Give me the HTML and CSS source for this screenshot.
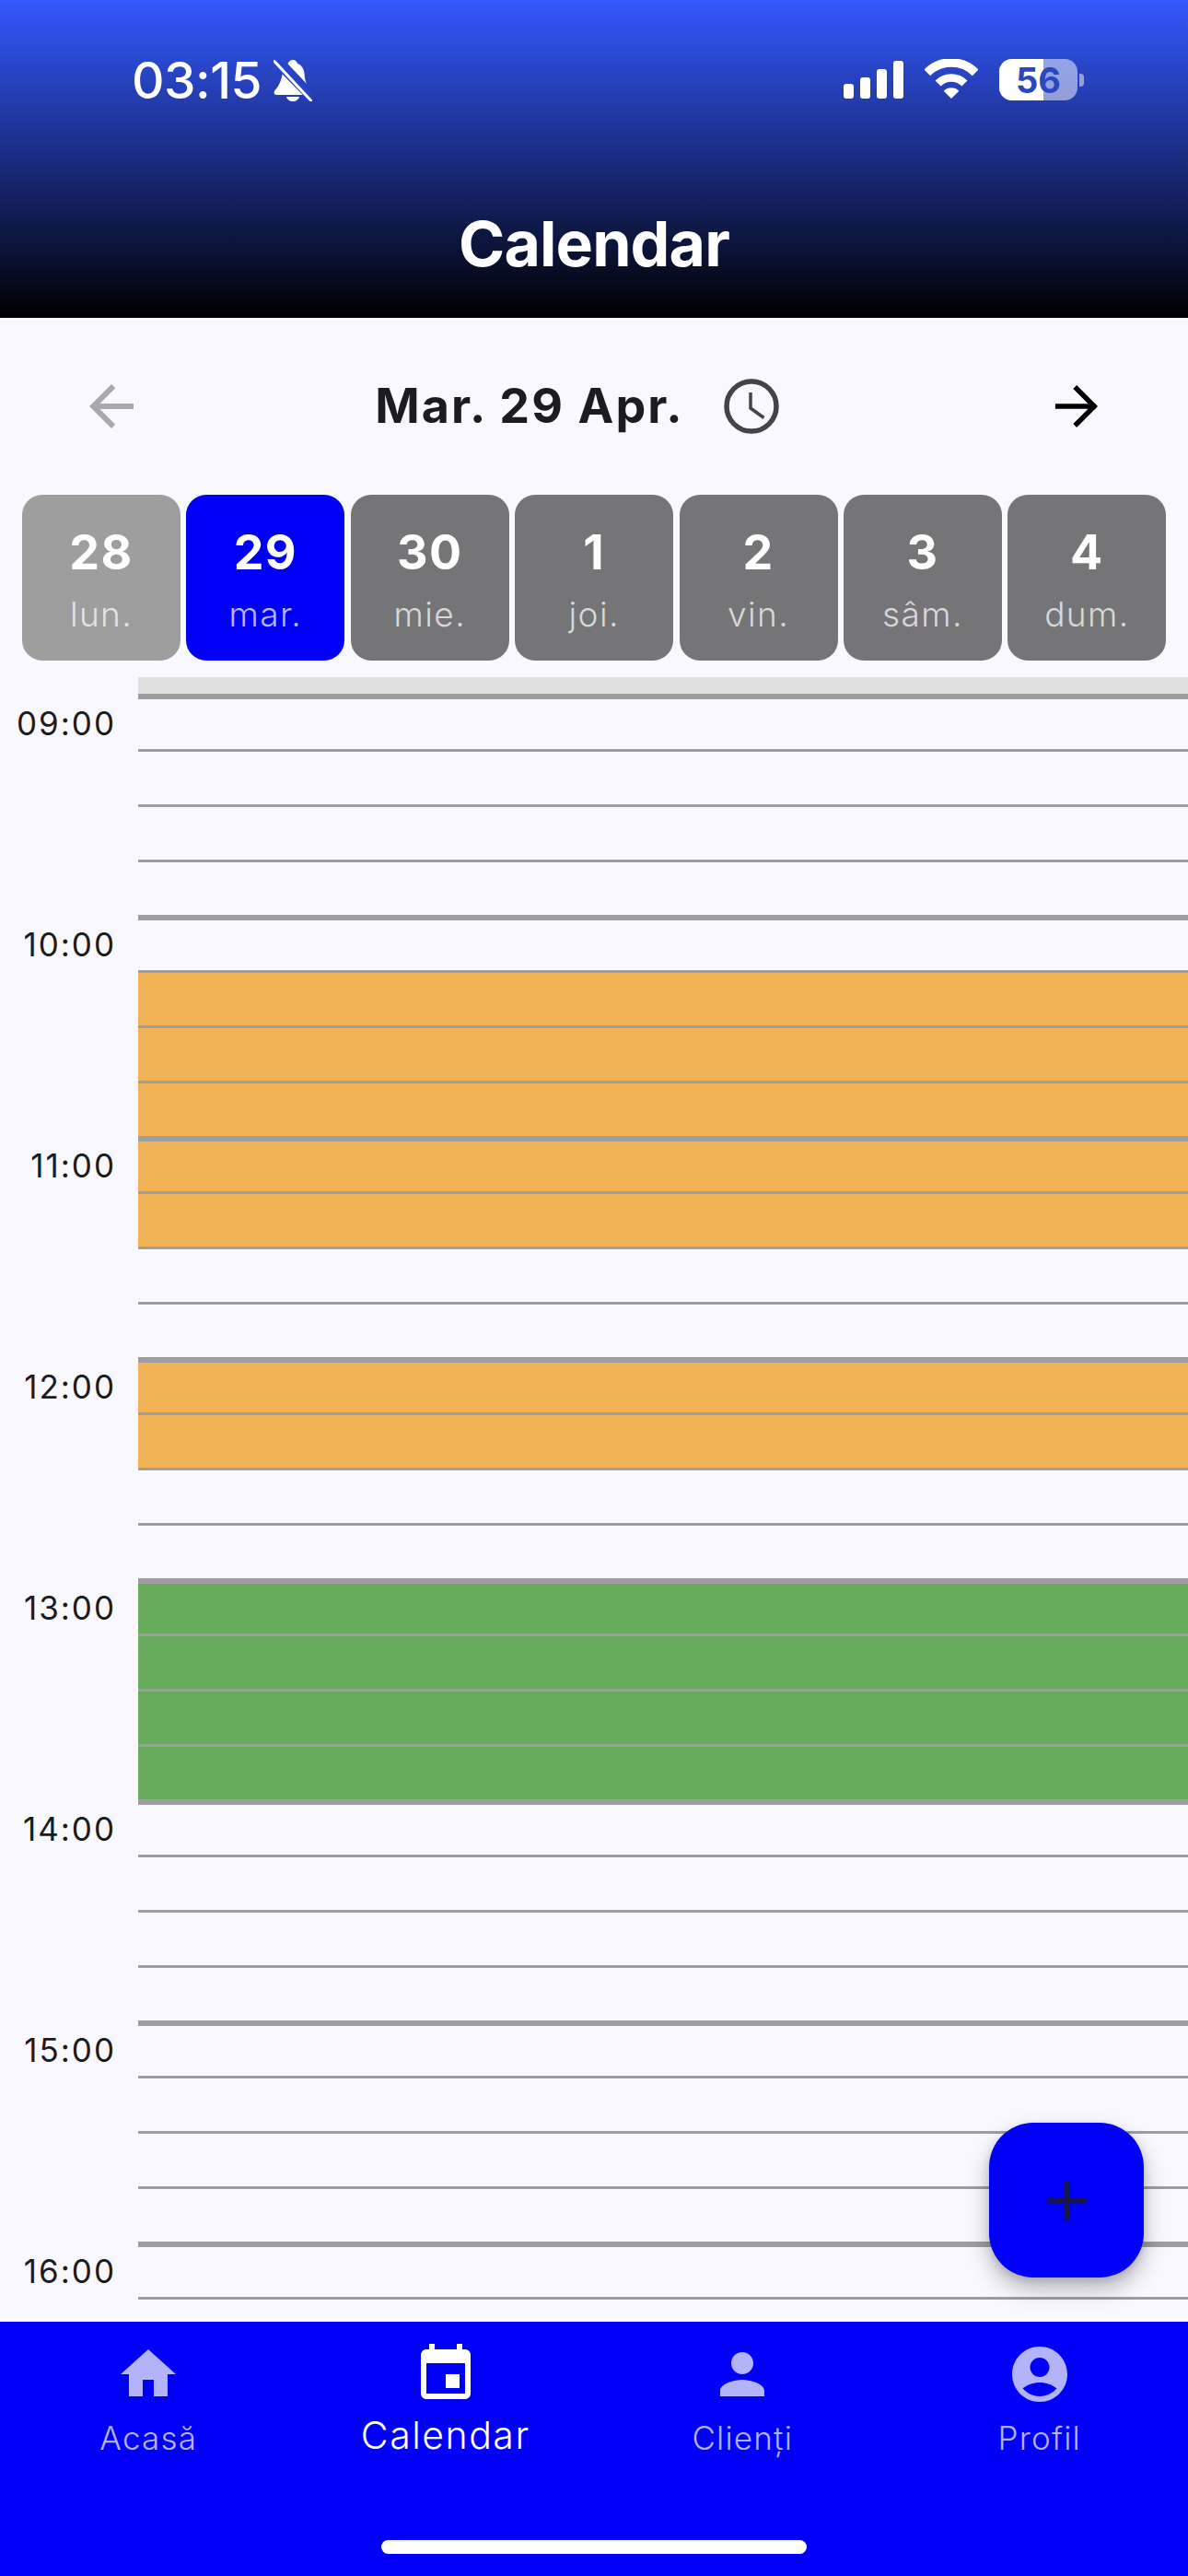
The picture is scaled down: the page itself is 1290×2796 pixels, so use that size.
FILE: index.html
```html
<!DOCTYPE html>
<html lang="ro">
<head>
<meta charset="utf-8">
<title>Calendar</title>
<link rel="stylesheet" href="styles.css">
</head>
<body>
<div class="phone">
  <header class="appbar">
    <div class="status">
      <div class="status-left">
        <span class="clock-text">03:15</span>
        <svg class="bell" viewBox="0 0 42 45"><path d="M15.500 4.200C16.500 1.700 18.500 0 21 0c2.600 0 4.500 2 5 4 5 1.800 7.500 6.500 7.700 12.500.1 3.500.8 6.500 2.300 9.500z" fill="#fff"/><path d="M9.600 15.600 31.800 38H3.500C1.500 38 .5 36.800.5 35.300c0-2 2.200-3.300 4.200-6.300 2.400-3.500 3.900-8 4.900-13.400z" fill="#fff"/><path d="M14 40h14c-.500 2.900-3.500 5-7 5s-6.500-2.100-7-5z" fill="#fff"/><path d="M1 1.500 40.500 44" stroke="#fff" stroke-width="3" stroke-linecap="round" fill="none"/><path d="M4 -1 44 42" stroke="#2746c4" stroke-width="3" fill="none"/></svg>
      </div>
      <div class="status-right">
        <div class="signal"><i class="bar b1"></i><i class="bar b2"></i><i class="bar b3"></i><i class="bar b4"></i></div>
        <svg class="wifi" viewBox="0 0 58 44"><g fill="none" stroke="#fff"><path d="M2.800 14.800a37 37 0 0 1 52.400 0" stroke-width="9.500"/><path d="M14.600 26.600a20.300 20.300 0 0 1 28.800 0" stroke-width="8.500"/></g><path d="M29 43 20.700 34.700a11.700 11.700 0 0 1 16.600 0z" fill="#fff"/></svg>
        <div class="battery"><div class="battery-body"><span class="battery-fill"></span><span class="battery-num">56</span></div><span class="battery-nub"></span></div>
      </div>
    </div>
    <h1 class="title">Calendar</h1>
  </header>

  <main class="content">
    <div class="datebar">
      <svg class="icon arrow arrow-muted" viewBox="0 0 24 24"><path d="M20 11H7.830l5.590-5.590L12 4l-8 8 8 8 1.410-1.410L7.830 13H20v-2z"/></svg>
      <div class="date">
        <span class="date-text">Mar. 29 Apr.</span>
        <svg class="time-icon" viewBox="0 0 60 60"><circle cx="30" cy="30" r="27" fill="none" stroke="#444448" stroke-width="5.500"/><path d="M29 15v17l14.500 10.500" fill="none" stroke="#444448" stroke-width="3.500"/></svg>
      </div>
      <svg class="icon arrow arrow-thin" viewBox="0 0 24 24"><path d="M4.300 12H19M11.400 5l7 7-7 7"/></svg>
    </div>

    <div class="days">
      <div class="day day-past"><b>28</b><span>lun.</span></div>
      <div class="day day-active"><b>29</b><span>mar.</span></div>
      <div class="day"><b>30</b><span>mie.</span></div>
      <div class="day"><b>1</b><span>joi.</span></div>
      <div class="day"><b>2</b><span>vin.</span></div>
      <div class="day"><b>3</b><span>sâm.</span></div>
      <div class="day"><b>4</b><span>dum.</span></div>
    </div>

    <div class="timeline">
      <div class="allday"></div>
      <section class="hour"><div class="hour-label">09:00</div><div class="slots"><div class="slot"></div><div class="slot"></div><div class="slot"></div><div class="slot"></div></div></section>
      <section class="hour"><div class="hour-label">10:00</div><div class="slots"><div class="slot"></div><div class="slot orange"></div><div class="slot orange"></div><div class="slot orange"></div></div></section>
      <section class="hour"><div class="hour-label">11:00</div><div class="slots"><div class="slot orange"></div><div class="slot orange"></div><div class="slot"></div><div class="slot"></div></div></section>
      <section class="hour"><div class="hour-label">12:00</div><div class="slots"><div class="slot orange"></div><div class="slot orange"></div><div class="slot"></div><div class="slot"></div></div></section>
      <section class="hour"><div class="hour-label">13:00</div><div class="slots"><div class="slot green"></div><div class="slot green"></div><div class="slot green"></div><div class="slot green"></div></div></section>
      <section class="hour"><div class="hour-label">14:00</div><div class="slots"><div class="slot"></div><div class="slot"></div><div class="slot"></div><div class="slot"></div></div></section>
      <section class="hour"><div class="hour-label">15:00</div><div class="slots"><div class="slot"></div><div class="slot"></div><div class="slot"></div><div class="slot"></div></div></section>
      <section class="hour"><div class="hour-label">16:00</div><div class="slots"><div class="slot"></div><div class="slot"></div><div class="slot"></div><div class="slot"></div></div></section>
    </div>

    <button class="fab" aria-label="Adaugă"><svg viewBox="0 0 42 42"><path d="M18 0h6v18h18v6H24v18h-6V24H0v-6h18z"/></svg></button>
  </main>

  <nav class="tabs">
    <div class="tab"><svg class="icon" viewBox="0 0 24 24"><path d="M10 20v-6h4v6h5v-8h3L12 3 2 12h3v8z"/></svg><span class="tab-label">Acasă</span></div>
    <div class="tab tab-active"><svg class="icon" viewBox="0 0 24 24"><path d="M17 12h-5v5h5v-5zM16 1v2H8V1H6v2H5c-1.110 0-1.990.9-1.990 2L3 19c0 1.100.89 2 2 2h14c1.100 0 2-.9 2-2V5c0-1.100-.9-2-2-2h-1V1h-2zm3 18H5V8h14v11z"/></svg><span class="tab-label">Calendar</span></div>
    <div class="tab"><svg class="icon" viewBox="0 0 24 24"><path d="M12 12c2.210 0 4-1.790 4-4s-1.790-4-4-4-4 1.790-4 4 1.790 4 4 4zm0 2c-2.670 0-8 1.340-8 4v2h16v-2c0-2.660-5.330-4-8-4z"/></svg><span class="tab-label">Clienți</span></div>
    <div class="tab"><svg class="icon" viewBox="0 0 24 24"><path d="M12 2C6.480 2 2 6.480 2 12s4.480 10 10 10 10-4.480 10-10S17.520 2 12 2zm0 4c1.930 0 3.500 1.570 3.500 3.500S13.930 13 12 13s-3.500-1.570-3.500-3.500S10.070 6 12 6zm0 14c-2.030 0-4.430-.82-6.140-2.880C7.550 15.800 9.680 15 12 15s4.450.8 6.140 2.120C16.430 19.180 14.030 20 12 20z"/></svg><span class="tab-label">Profil</span></div>
    <span class="home-indicator"></span>
  </nav>
</div>
</body>
</html>
```
FILE: styles.css
```css
* { box-sizing: border-box; }
html, body { margin: 0; padding: 0; }
body { font-family: Inter, "Liberation Sans", sans-serif; background: #faf8ff; color: #1c1b20; }
.phone { width: 1290px; height: 2796px; display: flex; flex-direction: column; overflow: hidden; position: relative; }

.appbar { height: 345px; flex: none; background: linear-gradient(180deg, #3358ff 0%, #000 100%); display: flex; flex-direction: column; color: #fff; }
.status { height: 129px; padding: 64px 113px 0 143px; display: flex; justify-content: space-between; align-items: flex-start; }
.status-left { display: flex; align-items: center; gap: 13px; height: 46px; }
.clock-text { font-size: 55px; font-weight: 500; line-height: 50px; letter-spacing: -.5px; }
.bell { width: 42px; height: 45px; }
.status-right { display: flex; align-items: flex-start; gap: 23px; }
.signal { display: flex; align-items: flex-end; gap: 7px; height: 41px; margin-top: 2px; }
.bar { width: 11px; background: #fff; border-radius: 3px; display: block; }
.b1 { height: 16px; } .b2 { height: 23px; } .b3 { height: 32px; } .b4 { height: 41px; }
.wifi { width: 58px; height: 44px; }
.battery { display: flex; align-items: center; gap: 2px; }
.battery-body { width: 85px; height: 45px; border-radius: 14px; background: rgba(255,255,255,.5); position: relative; overflow: hidden; display: flex; align-items: center; justify-content: center; }
.battery-fill { position: absolute; left: 0; top: 0; bottom: 0; width: 48px; background: #fff; }
.battery-num { position: relative; font-size: 38px; font-weight: 700; color: #2a47c2; line-height: 1; }
.battery-nub { width: 5px; height: 14px; background: rgba(255,255,255,.5); border-radius: 0 4px 4px 0; }
.title { margin: 95px 0 0; text-align: center; font-size: 68px; font-weight: 700; line-height: 80px; letter-spacing: -.9px; }

.content { flex: 1; min-height: 0; position: relative; display: flex; flex-direction: column; overflow: hidden; }
.datebar { height: 192px; flex: none; padding: 0 85px; display: flex; align-items: center; justify-content: space-between; }
.icon { width: 72px; height: 72px; display: block; fill: currentColor; }
.arrow { color: #000; }
.arrow-muted { color: #a9a8ae; }
.arrow-thin { fill: none; stroke: currentColor; stroke-width: 1.8; }
.date { display: flex; align-items: center; gap: 43px; margin-left: -37px; }
.date-text { font-size: 52px; font-weight: 700; line-height: 60px; letter-spacing: 2.1px; color: #1c1b20; }
.time-icon { width: 60px; height: 60px; }

.days { height: 180px; flex: none; padding: 0 24px; display: grid; grid-template-columns: repeat(7, 172px); column-gap: 6.4px; }
.day { background: #757577; border-radius: 22px; color: #fff; display: flex; flex-direction: column; align-items: center; padding-top: 32px; }
.day-past { background: #9e9e9e; }
.day-active { background: #0000f7; }
.day b { font-size: 52px; font-weight: 700; line-height: 62px; letter-spacing: 1.4px; }
.day span { font-size: 37px; font-weight: 300; line-height: 46px; letter-spacing: 1.4px; margin-top: 13px; color: rgba(255,255,255,.72); }

.timeline { flex: 1; min-height: 0; margin-top: 18px; overflow: hidden; }
.allday { height: 18px; margin-left: 150px; background: #e0e0e0; }
.hour { display: grid; grid-template-columns: 150px 1fr; height: 240px; }
.hour-label { text-align: right; padding: 10px 24px 0 0; font-size: 35px; line-height: 44px; letter-spacing: 2px; color: #1c1b20; }
.slots { display: grid; grid-template-rows: repeat(4, 60px); }
.slot { border-top: 3px solid #9e9e9e; }
.slot:first-child { border-top-width: 6px; }
.orange { background: #f2b356; }
.green { background: #69ab5c; }

.fab { position: absolute; left: 1074px; top: 1959px; width: 168px; height: 168px; border: 0; padding: 0; border-radius: 48px; background: #0000f7; box-shadow: 0 12px 24px rgba(0,0,0,.28), 0 3px 9px rgba(0,0,0,.12); display: flex; align-items: center; justify-content: center; }
.fab svg { width: 42px; height: 42px; fill: #15154f; }

.tabs { height: 276px; flex: none; background: #0000f7; display: grid; grid-template-columns: repeat(4, 1fr); position: relative; padding-top: 21px; align-items: start; }
.tab { display: flex; flex-direction: column; align-items: center; color: #b3b3fc; }
.tab-label { font-size: 35px; font-weight: 300; line-height: 44px; letter-spacing: 1.2px; margin-top: 11px; }
.tab-active { color: #fff; }
.tab-active .tab-label { font-size: 41px; font-weight: 300; margin-top: 5px; line-height: 50px; letter-spacing: 1.5px; }
.home-indicator { position: absolute; left: 414px; top: 237px; width: 462px; height: 15px; border-radius: 8px; background: #fff; }
```
